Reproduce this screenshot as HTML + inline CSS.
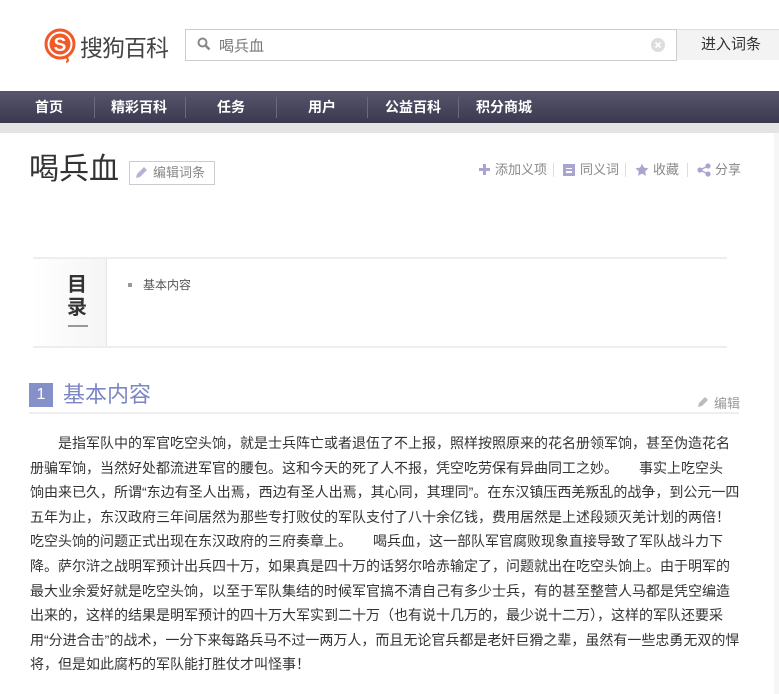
<!DOCTYPE html>
<html><head><meta charset="utf-8"><style>
*{margin:0;padding:0;box-sizing:border-box}
body{width:779px;height:694px;overflow:hidden;background:#fff;font-family:"Liberation Sans","Noto Sans CJK SC",sans-serif;color:#333;position:relative}
.a{position:absolute}
.nav{left:0;top:91px;width:779px;height:32px;background:linear-gradient(#57566c,#3b3950)}
.nav span{position:absolute;top:0;line-height:32px;color:#fff;font-size:14px;font-weight:bold}
.nav i{position:absolute;top:6px;width:1px;height:21px;background:#6a6980}
.tex{left:0;top:123px;width:779px;height:10px;background:#e4e4e4}
.body p{white-space:nowrap;font-size:14px;letter-spacing:0;line-height:24.6px;color:#333}
.act{position:absolute;top:161px;font-size:13px;color:#888;line-height:18px;white-space:nowrap}
.sep{position:absolute;top:163px;width:1px;height:14px;background:#ddd}
</style></head><body>
<svg class="a" style="left:44px;top:28px" width="34" height="36" viewBox="0 0 34 36"><circle cx="16" cy="16" r="14" fill="none" stroke="#f05a28" stroke-width="3"/><circle cx="16" cy="16" r="10.5" fill="#f05a28"/><text x="16" y="23" text-anchor="middle" font-size="19" font-weight="bold" fill="#fff" font-family="Liberation Sans">S</text><path d="M22 29 Q26 33 22 34" stroke="#f05a28" stroke-width="2" fill="none"/></svg>
<div class="a" style="left:80px;top:29px;font-size:23px;color:#444;letter-spacing:-1px">搜狗百科</div>
<div class="a" style="left:185px;top:29px;width:492px;height:32px;border:1px solid #ccc;border-right:none"></div>
<svg class="a" style="left:197px;top:37px" width="14" height="14"><circle cx="5.5" cy="5.5" r="4" stroke="#888" stroke-width="2" fill="none"/><path d="M8.5 8.5L12.5 12.5" stroke="#888" stroke-width="2.4"/></svg>
<div class="a" style="left:219px;top:35px;font-size:15px;color:#777">喝兵血</div>
<svg class="a" style="left:651px;top:38px" width="14" height="14"><circle cx="7" cy="7" r="7" fill="#ddd"/><path d="M4.5 4.5L9.5 9.5M9.5 4.5L4.5 9.5" stroke="#fff" stroke-width="1.8"/></svg>
<div class="a" style="left:676px;top:29px;width:103px;height:31px;background:#f3f3f3;border-left:1px solid #ccc;border-top:1px solid #ddd;font-size:15px;line-height:30px;padding-left:24px;color:#333">进入词条</div>
<div class="a nav">
<span style="left:35px">首页</span><i style="left:94px"></i>
<span style="left:111px">精彩百科</span><i style="left:185px"></i>
<span style="left:217px">任务</span><i style="left:276px"></i>
<span style="left:308px">用户</span><i style="left:367px"></i>
<span style="left:385px">公益百科</span><i style="left:458px"></i>
<span style="left:476px">积分商城</span>
</div>
<div class="a tex"></div>
<div class="a" style="left:774px;top:133px;width:5px;height:561px;background:#f6f6f6"></div>
<div class="a" style="left:29px;top:150px;font-size:30px;color:#333;line-height:40px">喝兵血</div>
<div class="a" style="left:129px;top:161px;width:86px;height:24px;border:1px solid #ccc;font-size:13px;color:#888;line-height:22px;padding-left:23px">编辑词条</div>
<svg class="a" style="left:134px;top:165px" width="15" height="15"><path d="M2 13 L3 9 L10 2 L13 5 L6 12 Z" fill="#b5b3d6"/></svg>
<svg class="a" style="left:479px;top:164px" width="11" height="11"><path d="M5.5 0V11M0 5.5H11" stroke="#a8a6d0" stroke-width="3"/></svg>
<div class="act" style="left:495px">添加义项</div>
<div class="sep" style="left:553px"></div>
<div class="a" style="left:563px;top:164px;width:12px;height:12px;background:#a8a6d0"></div>
<div class="a" style="left:566px;top:167.5px;width:6px;height:1.5px;background:#fff"></div>
<div class="a" style="left:566px;top:171px;width:6px;height:1.5px;background:#fff"></div>
<div class="act" style="left:580px">同义词</div>
<div class="sep" style="left:625px"></div>
<svg class="a" style="left:635px;top:163px" width="14" height="14" viewBox="0 0 24 24"><path d="M12 1l3.4 7 7.6 1-5.5 5.3 1.3 7.7L12 18.3 5.2 22l1.3-7.7L1 9l7.6-1z" fill="#a8a6d0"/></svg>
<div class="act" style="left:653px">收藏</div>
<div class="sep" style="left:687px"></div>
<svg class="a" style="left:697px;top:163px" width="14" height="14"><circle cx="3" cy="7" r="2.6" fill="#a8a6d0"/><circle cx="11" cy="3" r="2.6" fill="#a8a6d0"/><circle cx="11" cy="11" r="2.6" fill="#a8a6d0"/><path d="M3 7L11 3M3 7L11 11" stroke="#a8a6d0" stroke-width="1.5"/></svg>
<div class="act" style="left:715px">分享</div>
<div class="a" style="left:33px;top:257px;width:694px;height:91px;border-top:2px solid #eee;border-bottom:2px solid #eee"></div>
<div class="a" style="left:33px;top:259px;width:74px;height:87px;background:linear-gradient(90deg,#fff,#f5f5f5);border-right:1px solid #e6e6e6"></div>
<div class="a" style="left:67px;top:274px;font-size:20px;font-weight:bold;line-height:23px;width:22px;color:#333">目<br>录</div>
<div class="a" style="left:68px;top:325px;width:20px;height:2px;background:#999"></div>
<div class="a" style="left:128px;top:283px;width:4px;height:4px;background:#999"></div>
<div class="a" style="left:143px;top:276px;font-size:12px;color:#555">基本内容</div>
<div class="a" style="left:29px;top:383px;width:24px;height:24px;background:#8690c8;color:#fff;font-size:16px;text-align:center;line-height:24px">1</div>
<div class="a" style="left:63px;top:380px;font-size:22px;color:#7d86c4;line-height:30px">基本内容</div>
<div class="a" style="left:29px;top:412px;width:710px;height:2px;background:#eee"></div>
<svg class="a" style="left:697px;top:395px" width="13" height="13"><path d="M1 12 L2 8 L8 2 L11 5 L5 11 Z" fill="#bbb"/></svg>
<div class="a" style="left:714px;top:393px;font-size:13px;color:#999">编辑</div>
<div class="a body" style="left:30px;top:431px">
<p>　　是指军队中的军官吃空头饷，就是士兵阵亡或者退伍了不上报，照样按照原来的花名册领军饷，甚至伪造花名</p>
<p>册骗军饷，当然好处都流进军官的腰包。这和今天的死了人不报，凭空吃劳保有异曲同工之妙。　　事实上吃空头</p>
<p>饷由来已久，所谓“东边有圣人出焉，西边有圣人出焉，其心同，其理同”。在东汉镇压西羌叛乱的战争，到公元一四</p>
<p>五年为止，东汉政府三年间居然为那些专打败仗的军队支付了八十余亿钱，费用居然是上述段颎灭羌计划的两倍！</p>
<p>吃空头饷的问题正式出现在东汉政府的三府奏章上。　　喝兵血，这一部队军官腐败现象直接导致了军队战斗力下</p>
<p>降。萨尔浒之战明军预计出兵四十万，如果真是四十万的话努尔哈赤输定了，问题就出在吃空头饷上。由于明军的</p>
<p>最大业余爱好就是吃空头饷，以至于军队集结的时候军官搞不清自己有多少士兵，有的甚至整营人马都是凭空编造</p>
<p>出来的，这样的结果是明军预计的四十万大军实到二十万（也有说十几万的，最少说十二万），这样的军队还要采</p>
<p>用“分进合击”的战术，一分下来每路兵马不过一两万人，而且无论官兵都是老奸巨猾之辈，虽然有一些忠勇无双的悍</p>
<p>将，但是如此腐朽的军队能打胜仗才叫怪事！</p>
</div>
</body></html>
